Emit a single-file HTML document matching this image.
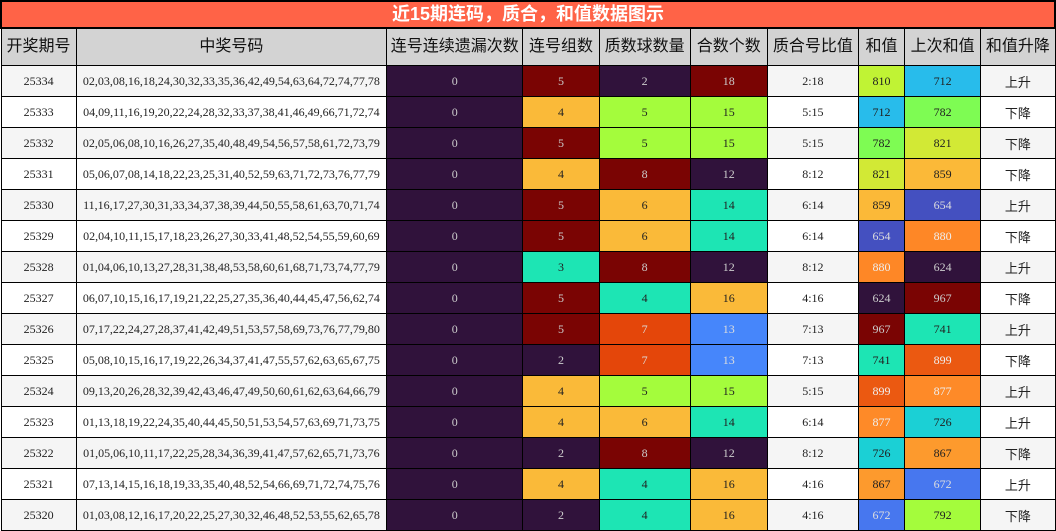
<!DOCTYPE html>
<html><head><meta charset="utf-8"><style>
body{margin:0;width:1056px;height:530px;overflow:hidden;background:#fff}
table{border-collapse:collapse;table-layout:fixed;width:1056px}
td,th{border:1px solid #000;padding:0;text-align:center;overflow:hidden;white-space:nowrap}
.t{height:25px;line-height:25px;background:#FF6347;color:#fff;font:bold 18px/25px "Liberation Sans","Noto Sans CJK SC",sans-serif;border:2px solid #000}
th{height:36px;line-height:20px;background:#D3D3D3;font:normal 16px/20px "Liberation Sans","Noto Sans CJK SC",sans-serif;color:#111}
td{height:30px;font:12px "Liberation Serif","Noto Sans CJK SC",serif;color:#222}
td.c{font:13px "Liberation Sans","Noto Sans CJK SC",sans-serif}
tr.o td{background:#F5F5F5}
tr td.D{background:#30123B;color:#ccc}
tr td.R{background:#7A0403;color:#ccc}
tr td.Y{background:#FABA39}
tr td.G{background:#A4FC3C}
tr td.T{background:#1DE5B4}
tr td.O{background:#E4460A;color:#ddd}
tr td.B{background:#4686FB;color:#ddd}
tr td.v810{background:#C0F334}tr td.v712{background:#28BCEB}tr td.v782{background:#7EFC53}
tr td.v821{background:#D2E935}tr td.v859{background:#FBB938}tr td.v654{background:#4450C0;color:#ddd}
tr td.v880{background:#FE8726;color:#eee}tr td.v624{background:#30123B;color:#ccc}tr td.v967{background:#7A0403;color:#ccc}
tr td.v741{background:#1DE5B4}tr td.v899{background:#EB5911;color:#eee}tr td.v877{background:#FE8A28;color:#eee}
tr td.v726{background:#1BD0D5}tr td.v867{background:#FD9A2D}tr td.v672{background:#4777EF;color:#ddd}tr td.v792{background:#A4FC3C}
</style></head><body>
<table>
<colgroup><col style="width:75px"><col style="width:310px"><col style="width:136px"><col style="width:76px"><col style="width:91px"><col style="width:77px"><col style="width:91px"><col style="width:46px"><col style="width:76px"><col style="width:74px"></colgroup>
<tr><td colspan="10" class="t">近15期连码，质合，和值数据图示</td></tr>
<tr><th>开奖期号</th><th>中奖号码</th><th>连号连续遗漏次数</th><th>连号组数</th><th>质数球数量</th><th>合数个数</th><th>质合号比值</th><th>和值</th><th>上次和值</th><th>和值升降</th></tr>
<tr class="o"><td>25334</td><td>02,03,08,16,18,24,30,32,33,35,36,42,49,54,63,64,72,74,77,78</td><td class="D">0</td><td class="R">5</td><td class="D">2</td><td class="R">18</td><td>2:18</td><td class="v810">810</td><td class="v712">712</td><td class="c">上升</td></tr>
<tr><td>25333</td><td>04,09,11,16,19,20,22,24,28,32,33,37,38,41,46,49,66,71,72,74</td><td class="D">0</td><td class="Y">4</td><td class="G">5</td><td class="G">15</td><td>5:15</td><td class="v712">712</td><td class="v782">782</td><td class="c">下降</td></tr>
<tr class="o"><td>25332</td><td>02,05,06,08,10,16,26,27,35,40,48,49,54,56,57,58,61,72,73,79</td><td class="D">0</td><td class="R">5</td><td class="G">5</td><td class="G">15</td><td>5:15</td><td class="v782">782</td><td class="v821">821</td><td class="c">下降</td></tr>
<tr><td>25331</td><td>05,06,07,08,14,18,22,23,25,31,40,52,59,63,71,72,73,76,77,79</td><td class="D">0</td><td class="Y">4</td><td class="R">8</td><td class="D">12</td><td>8:12</td><td class="v821">821</td><td class="v859">859</td><td class="c">下降</td></tr>
<tr class="o"><td>25330</td><td>11,16,17,27,30,31,33,34,37,38,39,44,50,55,58,61,63,70,71,74</td><td class="D">0</td><td class="R">5</td><td class="Y">6</td><td class="T">14</td><td>6:14</td><td class="v859">859</td><td class="v654">654</td><td class="c">上升</td></tr>
<tr><td>25329</td><td>02,04,10,11,15,17,18,23,26,27,30,33,41,48,52,54,55,59,60,69</td><td class="D">0</td><td class="R">5</td><td class="Y">6</td><td class="T">14</td><td>6:14</td><td class="v654">654</td><td class="v880">880</td><td class="c">下降</td></tr>
<tr class="o"><td>25328</td><td>01,04,06,10,13,27,28,31,38,48,53,58,60,61,68,71,73,74,77,79</td><td class="D">0</td><td class="T">3</td><td class="R">8</td><td class="D">12</td><td>8:12</td><td class="v880">880</td><td class="v624">624</td><td class="c">上升</td></tr>
<tr><td>25327</td><td>06,07,10,15,16,17,19,21,22,25,27,35,36,40,44,45,47,56,62,74</td><td class="D">0</td><td class="R">5</td><td class="T">4</td><td class="Y">16</td><td>4:16</td><td class="v624">624</td><td class="v967">967</td><td class="c">下降</td></tr>
<tr class="o"><td>25326</td><td>07,17,22,24,27,28,37,41,42,49,51,53,57,58,69,73,76,77,79,80</td><td class="D">0</td><td class="R">5</td><td class="O">7</td><td class="B">13</td><td>7:13</td><td class="v967">967</td><td class="v741">741</td><td class="c">上升</td></tr>
<tr><td>25325</td><td>05,08,10,15,16,17,19,22,26,34,37,41,47,55,57,62,63,65,67,75</td><td class="D">0</td><td class="D">2</td><td class="O">7</td><td class="B">13</td><td>7:13</td><td class="v741">741</td><td class="v899">899</td><td class="c">下降</td></tr>
<tr class="o"><td>25324</td><td>09,13,20,26,28,32,39,42,43,46,47,49,50,60,61,62,63,64,66,79</td><td class="D">0</td><td class="Y">4</td><td class="G">5</td><td class="G">15</td><td>5:15</td><td class="v899">899</td><td class="v877">877</td><td class="c">上升</td></tr>
<tr><td>25323</td><td>01,13,18,19,22,24,35,40,44,45,50,51,53,54,57,63,69,71,73,75</td><td class="D">0</td><td class="Y">4</td><td class="Y">6</td><td class="T">14</td><td>6:14</td><td class="v877">877</td><td class="v726">726</td><td class="c">上升</td></tr>
<tr class="o"><td>25322</td><td>01,05,06,10,11,17,22,25,28,34,36,39,41,47,57,62,65,71,73,76</td><td class="D">0</td><td class="D">2</td><td class="R">8</td><td class="D">12</td><td>8:12</td><td class="v726">726</td><td class="v867">867</td><td class="c">下降</td></tr>
<tr><td>25321</td><td>07,13,14,15,16,18,19,33,35,40,48,52,54,66,69,71,72,74,75,76</td><td class="D">0</td><td class="Y">4</td><td class="T">4</td><td class="Y">16</td><td>4:16</td><td class="v867">867</td><td class="v672">672</td><td class="c">上升</td></tr>
<tr class="o"><td>25320</td><td>01,03,08,12,16,17,20,22,25,27,30,32,46,48,52,53,55,62,65,78</td><td class="D">0</td><td class="D">2</td><td class="T">4</td><td class="Y">16</td><td>4:16</td><td class="v672">672</td><td class="v792">792</td><td class="c">下降</td></tr>
</table>
</body></html>
